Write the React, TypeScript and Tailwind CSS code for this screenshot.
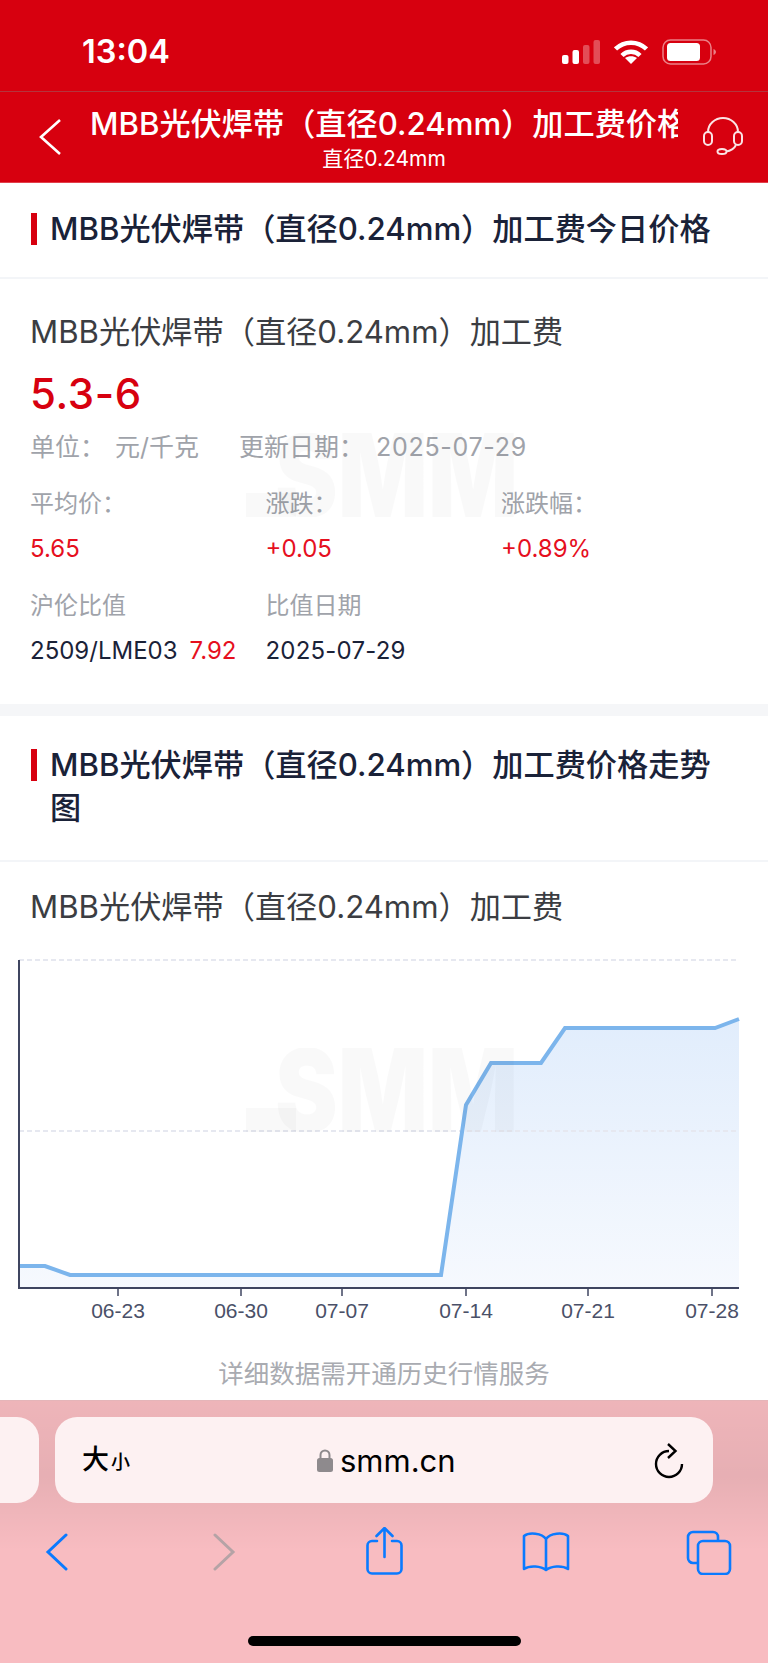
const sans = "font-['Inter','Noto_Sans_CJK_SC',sans-serif]";

const linePoints = '19,1266 45,1266 70,1275 441,1275 466,1105 491,1063 541,1063 565,1028 715,1028 739,1019';
const areaPoints = `${linePoints} 739,1288 19,1288`;
const ticks = [
  { x: 118, label: '06-23' },
  { x: 241, label: '06-30' },
  { x: 342, label: '07-07' },
  { x: 466, label: '07-14' },
  { x: 588, label: '07-21' },
  { x: 712, label: '07-28' },
];

function SectionTitle({ children, className = '' }: { children: React.ReactNode; className?: string }) {
  return (
    <div className={`flex gap-[13px] border-b-2 border-[#f3f5f8] pl-[31px] pr-[42px] ${className}`}>
      <span className="mt-[5px] h-[32px] w-[6px] flex-none bg-[#d7000f]" />
      <h2 className="text-[31.2px] leading-[43px] font-medium text-[#1a2238]">{children}</h2>
    </div>
  );
}

function Watermark({ className }: { className: string }) {
  return (
    <div className={`pointer-events-none absolute left-[246px] h-[84px] w-[276px] overflow-hidden ${className}`}>
      <span className="absolute bottom-0 left-0 h-[24px] w-[50px] bg-black/[0.025]" />
      <span className="absolute left-[29px] top-[-15px] origin-left scale-x-[0.82] text-[115px] leading-[115px] font-black text-black/[0.025]">SMM</span>
    </div>
  );
}

function Cell({ label, children }: { label: string; children: React.ReactNode }) {
  return (
    <div className="w-[235.5px]">
      <div className="text-[24px] leading-[30px] text-[#a0a3aa]">{label}</div>
      <div className="mt-[15px] text-[24px] leading-[30px]">{children}</div>
    </div>
  );
}

function StatusBar() {
  return (
    <div className="flex h-[92px] items-center justify-between border-b border-[#b5343d] bg-[#d7000f] pt-[12px] pl-[82px] pr-[51px]">
      <span className="mt-[1px] text-[32.5px] font-semibold text-white">13:04</span>
      <div className="flex items-center gap-[14px]">
        <svg width="38" height="24" viewBox="0 0 38 24" fill="white">
          <rect x="0" y="15" width="6.500" height="9" rx="2" />
          <rect x="10.500" y="10" width="6.500" height="14" rx="2" />
          <rect x="21" y="5" width="6.500" height="19" rx="2" opacity="0.3" />
          <rect x="31.500" y="0" width="6.500" height="24" rx="2" opacity="0.3" />
        </svg>
        <svg width="34" height="24" viewBox="0 0 34 24" fill="none" stroke="white" strokeWidth="4.500">
          <path d="M1.500 9C10 0.500 24 0.500 32.500 9" />
          <path d="M8 15.500C13 10.500 21 10.500 26 15.500" />
          <path d="M17 24l-6-6c3.500-2.500 8.500-2.500 12 0z" fill="white" stroke="none" />
        </svg>
        <svg width="55" height="26" viewBox="0 0 55 26" fill="none">
          <rect x="1" y="1" width="48" height="24" rx="7.500" stroke="white" strokeOpacity="0.5" strokeWidth="1.500" />
          <rect x="5" y="4" width="33" height="18" rx="3.500" fill="white" />
          <path d="M51.500 10c1.500 .5 2.500 2 2.500 3s-1 2.500-2.500 3z" fill="white" fillOpacity="0.5" />
        </svg>
      </div>
    </div>
  );
}

function NavBar() {
  return (
    <div className="flex h-[91px] flex-none items-center border-b border-[#e2404b] bg-[#d7000f]">
      <svg className="ml-[38px] flex-none" width="24" height="38" viewBox="0 0 24 38" fill="none" stroke="white" strokeWidth="2.600">
        <path d="M22 2L3 19l19 17" />
      </svg>
      <div className="ml-[28px] w-[588px] min-w-0 self-start overflow-hidden pt-[11px] text-center text-white">
        <div className="h-[43px] overflow-hidden text-left text-[31.2px] leading-[43px] font-medium whitespace-nowrap">
          MBB光伏焊带（直径0.24mm）加工费价格走势图
        </div>
        <div className="mt-[1px] text-[21px] leading-[24px]">直径0.24mm</div>
      </div>
      <svg className="ml-[25px] mt-[-2px] flex-none" width="40" height="38" viewBox="0 0 40 38" fill="none" stroke="#fbe3e5" strokeWidth="2">
        <path d="M5 16V15C5 7 12 1 20 1s15 6 15 14v1" />
        <rect x="1" y="15" width="8" height="13" rx="4" />
        <rect x="31" y="15" width="8" height="13" rx="4" />
        <path d="M33 28c-2 4-6 6-10 6.500" />
        <ellipse cx="19" cy="34.500" rx="4.500" ry="2.500" />
      </svg>
    </div>
  );
}

function Chart() {
  return (
    <svg className="absolute left-0 top-[950px]" width="768" height="380" viewBox="0 950 768 380">
      <defs>
        <linearGradient id="area" x1="0" y1="1019" x2="0" y2="1288" gradientUnits="userSpaceOnUse">
          <stop offset="0" stopColor="#e1edfc" />
          <stop offset="1" stopColor="#f6f9fe" />
        </linearGradient>
      </defs>
      <line x1="19" y1="960" x2="739" y2="960" stroke="#e6e8f0" strokeWidth="2" strokeDasharray="5 3" />
      <polygon points={areaPoints} fill="url(#area)" />
      <line x1="19" y1="1131" x2="739" y2="1131" stroke="#e6e8f0" strokeWidth="2" strokeDasharray="5 3" />
      <polyline points={linePoints} fill="none" stroke="#7cb5ec" strokeWidth="4" />
      <line x1="19" y1="960" x2="19" y2="1289" stroke="#3f4560" strokeWidth="2" />
      <line x1="19" y1="1288" x2="739" y2="1288" stroke="#3f4560" strokeWidth="2" />
      {ticks.map((t) => (
        <line key={t.x} x1={t.x} y1="1288" x2={t.x} y2="1296" stroke="#3f4560" strokeWidth="1.500" />
      ))}
      {ticks.map((t) => (
        <text key={t.label} x={Math.min(t.x, 713)} y="1318" textAnchor="middle" fontSize="21" fontFamily="Liberation Sans" fill="#4a5068">
          {t.label}
        </text>
      ))}
    </svg>
  );
}

function SafariBar() {
  return (
    <div className="relative flex-1 bg-[#f8bcc1] pt-[16px]">
      <div className="absolute inset-x-0 top-0 h-[150px] bg-gradient-to-b from-black/[0.04] via-black/[0.07] to-transparent" />
      <div className="relative flex gap-[16px]">
        <div className="h-[86px] w-[39px] flex-none rounded-r-[22px] bg-[#fdf1f2]" />
        <div className="flex h-[86px] w-[658px] items-center rounded-[22px] bg-[#fdf1f2] pl-[27px] pr-[27px]">
          <span className="flex w-[234px] items-baseline text-black">
            <span className="text-[27px] font-medium">大</span>
            <span className="ml-[2px] text-[19px] font-medium">小</span>
          </span>
          <svg width="18" height="25" viewBox="0 0 18 25" fill="none" className="mt-[1px]">
            <path d="M4.500 11V7a4.500 4.500 0 0 1 9 0v4" stroke="#8e8a8d" strokeWidth="2" />
            <rect x="1" y="10" width="16" height="14" rx="2.500" fill="#8e8a8d" />
          </svg>
          <span className="ml-[6px] text-[31px] leading-none text-black">smm.cn</span>
          <svg className="ml-auto mt-[2px]" width="32" height="38" viewBox="0 0 32 38" fill="none" stroke="black" strokeWidth="2.400">
            <path d="M15 9A13 13 0 1 0 28 22" />
            <path d="M14 2l7.500 7-7.500 7" />
          </svg>
        </div>
      </div>
      <div className="relative mt-[24px] flex h-[50px] items-center">
        <svg className="absolute left-[45px]" width="24" height="38" viewBox="0 0 24 38" fill="none" stroke="#0a7aff" strokeWidth="3" strokeLinecap="round">
          <path d="M21 2L3 19l18 17" />
        </svg>
        <svg className="absolute left-[212px]" width="24" height="38" viewBox="0 0 24 38" fill="none" stroke="#b5a3a6" strokeWidth="3" strokeLinecap="round">
          <path d="M3 2l18 17L3 36" />
        </svg>
        <svg className="absolute left-[366px] top-0" width="37" height="48" viewBox="0 0 37 48" fill="none" stroke="#0a7aff" strokeWidth="2.600" strokeLinecap="round">
          <path d="M11 14H6a4.500 4.500 0 0 0-4.500 4.500v23.500a4.500 4.500 0 0 0 4.500 4.500h25a4.500 4.500 0 0 0 4.500-4.500V18.500a4.500 4.500 0 0 0-4.500-4.500h-5" />
          <path d="M18.500 30V2M10.500 9l8-8 8 8" />
        </svg>
        <svg className="absolute left-[522px]" width="48" height="40" viewBox="0 0 48 40" fill="none" stroke="#0a7aff" strokeWidth="2.600" strokeLinejoin="round">
          <path d="M24 7C20 1 7 0 2 4v33c6-4 17-3 22 1 5-4 16-5 22-1V4C41 0 28 1 24 7zM24 7v31" />
        </svg>
        <svg className="absolute left-[686px]" width="46" height="45" viewBox="0 0 46 45" fill="none" stroke="#0a7aff" strokeWidth="2.600">
          <rect x="12" y="11" width="32" height="33" rx="5" />
          <path d="M12 33H7a5 5 0 0 1-5-5V7a5 5 0 0 1 5-5h20a5 5 0 0 1 5 5v4" />
        </svg>
      </div>
      <div className="absolute bottom-[17px] left-[248px] h-[10px] w-[273px] rounded-full bg-black" />
    </div>
  );
}

export default function App() {
  return (
    <div className={`relative flex h-[1663px] w-[768px] flex-col overflow-hidden bg-white ${sans}`}>
      <StatusBar />
      <NavBar />

      <SectionTitle className="pt-[25px] pb-[26px]">MBB光伏焊带（直径0.24mm）加工费今日价格</SectionTitle>

      <div className="px-[30px] pt-[32px]">
        <div className="text-[31.2px] leading-[42px] text-[#3b3d42]">MBB光伏焊带（直径0.24mm）加工费</div>
        <div className="mt-[17px] text-[42px] leading-[48px] font-medium tracking-[0.6px] text-[#d7000f]">5.3-6</div>
        <div className="mt-[14px] flex text-[25px] leading-[30px] text-[#a0a3aa]">
          <span>单位：</span>
          <span className="ml-[10px]">元/千克</span>
          <span className="ml-[40px]">更新日期：</span>
          <span className="ml-[12px] tracking-[0.7px]">2025-07-29</span>
        </div>
        <div className="mt-[27px] flex">
          <Cell label="平均价："><span className="text-[#e60f1e]">5.65</span></Cell>
          <Cell label="涨跌："><span className="text-[#e60f1e]">+0.05</span></Cell>
          <Cell label="涨跌幅："><span className="text-[#e60f1e]">+0.89%</span></Cell>
        </div>
        <div className="mt-[27px] flex">
          <Cell label="沪伦比值">
            <span className="text-[#1a2238]">2509/LME03</span>
            <span className="ml-[12px] text-[#e60f1e]">7.92</span>
          </Cell>
          <Cell label="比值日期"><span className="tracking-[0.2px] text-[#1a2238]">2025-07-29</span></Cell>
        </div>
      </div>

      <div className="mt-[38px] h-[12px] flex-none bg-[#f5f6f8]" />

      <SectionTitle className="pt-[28px] pb-[30px]">MBB光伏焊带（直径0.24mm）加工费价格走势图</SectionTitle>

      <div className="px-[30px] pt-[24px] text-[31.2px] leading-[42px] text-[#3b3d42]">MBB光伏焊带（直径0.24mm）加工费</div>

      <div className="mt-[429px] h-[34px] flex-none text-center text-[25.5px] leading-[34px] text-[#a9abb1]">详细数据需开通历史行情服务</div>

      <div className="mt-[9px] h-px flex-none bg-[#e5b5b9]" />
      <SafariBar />

      <Chart />
      <Watermark className="top-[433px]" />
      <Watermark className="top-[1048px]" />
    </div>
  );
}
